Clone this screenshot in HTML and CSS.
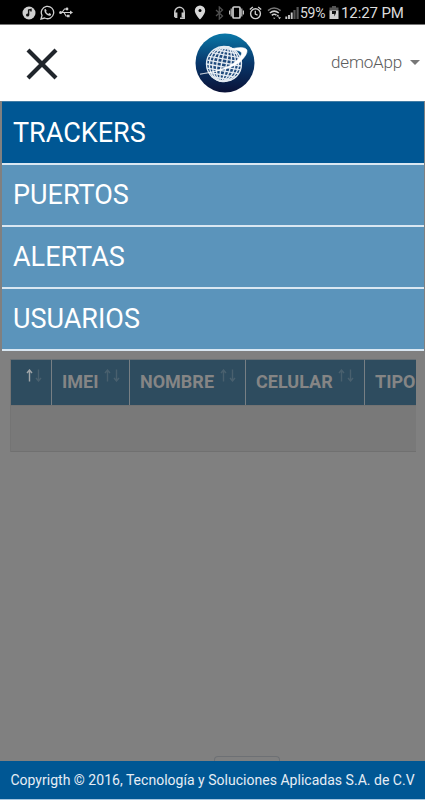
FILE: index.html
```html
<!DOCTYPE html>
<html lang="es">
<head>
  <meta charset="UTF-8" />
  <meta name="viewport" content="width=device-width, initial-scale=1.0"/>
  <title>Trackers</title>
  <link rel="stylesheet" href="styles.css">
</head>
<body>

<!-- Status bar -->
<div class="status-bar">
  <div class="status-left">
    <svg width="14" height="14" viewBox="0 0 14 14">
      <circle cx="7" cy="7" r="6.5" fill="#d0d0d0"/>
      <path d="M6.600 9.300V4L9 3.400v2" fill="none" stroke="#111" stroke-width="1.400"/>
      <circle cx="5.600" cy="9" r="1.600" fill="#111"/>
    </svg>
    <svg width="15" height="15" viewBox="0 0 15 15">
      <path d="M1 14l1-3.600A6.200 6.200 0 1 1 4.600 13z" fill="none" stroke="#d0d0d0" stroke-width="1.300"/>
      <path d="M4.500 4.300l1.200-.4 1 2-.7.9q.8 1.500 2.300 2.100l.9-.8 1.900 1-.4 1.300q-1.300 1-3.500-.4-3.300-2.200-2.700-5.700z" fill="#d0d0d0"/>
    </svg>
    <svg width="14" height="11" viewBox="0 0 14 11">
      <path d="M1 5.500h11M3 5.500L5.500 2H8M5 5.500L7 9h2" fill="none" stroke="#d0d0d0" stroke-width="1.100"/>
      <circle cx="1.600" cy="5.500" r="1.500" fill="#d0d0d0"/>
      <circle cx="8" cy="2" r="1.400" fill="#d0d0d0"/>
      <path d="M8 7.700h2.600v2.600H8zM11 3.600l3 1.900-3 1.900z" fill="#d0d0d0"/>
    </svg>
  </div>
  <div class="status-right">
    <svg class="headset" width="13" height="14" viewBox="0 0 13 14">
      <path d="M1.800 9V6a4.700 4.700 0 0 1 9.400 0v6.300H7" fill="none" stroke="#c8c8c8" stroke-width="1.500"/>
      <path d="M1 6.500h3.400V12H2.500L1 10.800zM8.600 6.500H12V11.500H8.600z" fill="#c8c8c8"/>
    </svg>
    <svg class="pin" width="12" height="15" viewBox="0 0 12 15">
      <path d="M6 .5a5.200 5.200 0 0 0-5.200 5.200C.8 9 6 14.500 6 14.500S11.200 9 11.200 5.700A5.200 5.200 0 0 0 6 .5z" fill="#d8d8d8"/>
      <circle cx="6" cy="5.600" r="1.500" fill="#000"/>
    </svg>
    <svg class="bluetooth" width="9" height="14" viewBox="0 0 9 14">
      <path d="M1 4l6.500 6L4.300 13V1l3.200 3L1 10" fill="none" stroke="#505050" stroke-width="1.300"/>
    </svg>
    <svg class="vibrate" width="15" height="13" viewBox="0 0 15 13">
      <rect x="4" y="1" width="7" height="11" rx="1" fill="none" stroke="#d0d0d0" stroke-width="1.700"/>
      <path d="M2.200 2.500v8M.6 4.500v4M12.800 2.500v8M14.400 4.500v4" stroke="#d0d0d0" stroke-width="1.100"/>
    </svg>
    <svg class="alarm" width="13" height="14" viewBox="0 0 13 14">
      <circle cx="6.500" cy="7.700" r="4.900" fill="none" stroke="#d0d0d0" stroke-width="1.400"/>
      <path d="M.8 3.600L3.800 1M12.200 3.600L9.200 1M6.300 4.800v3.300l2.300 1" fill="none" stroke="#d0d0d0" stroke-width="1.300"/>
    </svg>
    <svg class="wifi" width="15" height="14" viewBox="0 0 15 14">
      <path d="M1 4.600q6-5.200 12.600 0" fill="none" stroke="#777" stroke-width="1.500"/>
      <path d="M2.800 7q4.400-3.700 9 0M4.800 9.400q2.300-2 4.700-.2" fill="none" stroke="#d0d0d0" stroke-width="1.500"/>
      <path d="M6 11.700h2.400L7.200 13zM9.300 10.400l1.500-2 1.500 2zM11 11.300h3l-1.500 2z" fill="#d0d0d0"/>
    </svg>
    <svg class="signal" width="14" height="12" viewBox="0 0 14 12">
      <path d="M1.300 12V9.500M4 12V8M6.700 12V5.500" stroke="#c8c8c8" stroke-width="1.900"/>
      <path d="M9.500 12V3M12.600 12V0" stroke="#555" stroke-width="2.200"/>
    </svg>
    <span class="percent">59%</span>
    <svg class="battery" width="10" height="13" viewBox="0 0 10 13">
      <path d="M3 0h4v1.500h2.500V5H.5V1.500H3z" fill="#555"/>
      <path d="M.5 4.500h9V13h-9z" fill="#d0d0d0"/>
      <path d="M3 5h4v2L5.300 10.500V8H3z" fill="#111"/>
    </svg>
    <span class="clock">12:27 PM</span>
  </div>
</div>

<!-- Header -->
<header class="header">
  <button class="close-btn" aria-label="Cerrar">
    <svg width="32" height="32" viewBox="0 0 32 32">
      <path d="M2 2l28 28M30 2L2 30" stroke="#20252b" stroke-width="4.200"/>
    </svg>
  </button>
  <svg class="logo" width="60" height="60" viewBox="0 0 60 60">
    <defs>
      <linearGradient id="sky" x1="0" y1="0" x2="0" y2="1">
        <stop offset="0" stop-color="#0a78a8"/>
        <stop offset=".5" stop-color="#08376b"/>
        <stop offset="1" stop-color="#0b1237"/>
      </linearGradient>
    </defs>
    <circle cx="30" cy="30" r="29.500" fill="url(#sky)"/>
    <g transform="rotate(10 29 31)" fill="none" stroke="#e4ebf2" stroke-width="1.350">
      <circle cx="29" cy="31" r="17.500" fill="#1f4a7c"/>
      <ellipse cx="29" cy="31" rx="2.500" ry="17.500"/>
      <ellipse cx="29" cy="31" rx="7" ry="17.500"/>
      <ellipse cx="29" cy="31" rx="11" ry="17.500"/>
      <ellipse cx="29" cy="31" rx="14.500" ry="17.500"/>
      <path d="M22 15.500h14M18 18.500h22M15 22h28M13 26h32M12 30h34M12 34h34M13 38h32M15 42h28M19 45.500h20"/>
    </g>
    <path d="M5 41.200Q23 38.500 35 32.500Q44 27 46.500 21Q48 17.500 35 16Q50 12.500 52 17Q53 21 45.500 28.500Q37 36.500 5 41.200z" fill="#fff" stroke="#fff" stroke-width=".5"/>
  </svg>
  <div class="user-menu">demoApp <span class="caret"></span></div>
</header>

<!-- Dimmed page with the open menu -->
<main class="content">
  <nav class="menu">
    <a class="active" href="#">TRACKERS</a>
    <a href="#">PUERTOS</a>
    <a href="#">ALERTAS</a>
    <a href="#">USUARIOS</a>
  </nav>

  <div class="table-wrap">
    <table>
      <tr>
        <th class="col-id">
          <svg class="sort sort-asc" width="16" height="13" viewBox="0 0 16 13">
            <path class="up" d="M3.500 12.500V1M1 4l2.500-3L6 4"/>
            <path d="M12.500 .5V12M10 9l2.500 3L15 9"/>
          </svg>
        </th>
        <th class="col-imei">IMEI
          <svg class="sort" width="16" height="13" viewBox="0 0 16 13">
            <path d="M3.500 12.500V1M1 4l2.500-3L6 4M12.500 .5V12M10 9l2.500 3L15 9"/>
          </svg>
        </th>
        <th class="col-nombre">NOMBRE
          <svg class="sort" width="16" height="13" viewBox="0 0 16 13">
            <path d="M3.500 12.500V1M1 4l2.500-3L6 4M12.500 .5V12M10 9l2.500 3L15 9"/>
          </svg>
        </th>
        <th class="col-celular">CELULAR
          <svg class="sort" width="16" height="13" viewBox="0 0 16 13">
            <path d="M3.500 12.500V1M1 4l2.500-3L6 4M12.500 .5V12M10 9l2.500 3L15 9"/>
          </svg>
        </th>
        <th class="col-tipo">TIPO</th>
      </tr>
      <tr>
        <td colspan="5"></td>
      </tr>
    </table>
  </div>

  <div class="pager"></div>
</main>

<footer class="footer">Copyrigth © 2016, Tecnología y Soluciones Aplicadas S.A. de C.V</footer>

</body>
</html>
```
FILE: styles.css
```css
* {
  margin: 0;
  padding: 0;
  box-sizing: border-box;
}

body {
  font-family: Roboto, sans-serif;
  background: #808080;
  height: 100vh;
  display: flex;
  flex-direction: column;
  overflow: hidden;
}

.status-bar {
  height: 25px;
  background: #000;
  border-bottom: 1px solid #777;
  color: #dcdcdc;
  display: flex;
  justify-content: space-between;
  padding: 1px 21px 0 22px;
}

.status-left,
.status-right {
  display: flex;
  align-items: center;
}

.status-left {
  gap: 4px;
}

.status-right .pin {
  margin-left: 8px;
}

.status-right .bluetooth {
  margin-left: 9px;
}

.status-right .vibrate {
  margin-left: 5px;
}

.status-right .alarm {
  margin-left: 5px;
}

.status-right .wifi {
  margin-left: 5px;
}

.status-right .signal {
  margin-left: 3px;
}

.percent {
  margin-left: 1px;
  width: 25px;
  font-size: 14px;
  letter-spacing: -0.3px;
}

.battery {
  margin-left: 4px;
}

.clock {
  margin-left: 2px;
  width: 63px;
  font-size: 15px;
  letter-spacing: -0.1px;
  white-space: nowrap;
}

.header {
  height: 76px;
  background: #fff;
  display: grid;
  grid-template-columns: 1fr 60px 170px;
  align-items: center;
}

.close-btn {
  width: 32px;
  height: 32px;
  margin-left: 26px;
  margin-top: 2px;
  border: none;
  background: none;
  cursor: pointer;
}

.user-menu {
  justify-self: end;
  display: flex;
  align-items: center;
  gap: 8px;
  padding-right: 5px;
  color: #5c5c5c;
  font-size: 17px;
  font-weight: 300;
  letter-spacing: -0.2px;
  margin-top: -2px;
}

.caret {
  border-left: 5px solid transparent;
  border-right: 5px solid transparent;
  border-top: 5px solid #777;
}

.content {
  flex: 1;
  display: flex;
  flex-direction: column;
}

.menu {
  margin: 0 1px 0 2px;
  padding-top: 1px;
  background: #005794;
  border-top: 1px solid #437da5;
}

.menu a {
  display: block;
  height: 62px;
  padding-left: 11px;
  line-height: 61px;
  font-size: 27px;
  color: #fff;
  text-decoration: none;
  background: #5b94bb;
  border-bottom: 2px solid #d9e7f2;
}

.menu a.active {
  background: #005794;
}

.table-wrap {
  margin: 8px 9px 0 10px;
  overflow: hidden;
}

table {
  width: 432px;
  table-layout: fixed;
  border-collapse: separate;
  border-spacing: 0;
  border-left: 1px solid #747474;
}

th {
  height: 46px;
  padding-left: 10px;
  padding-bottom: 2px;
  background: #2e4c5f;
  border-right: 1px solid #777f84;
  border-top: 1px solid #687176;
  color: #858585;
  font-size: 18px;
  font-weight: bold;
  text-align: left;
  white-space: nowrap;
}

.col-id {
  width: 41px;
  padding-left: 15px;
}

.col-imei {
  width: 78px;
}

.col-nombre {
  width: 116px;
}

.col-celular {
  width: 119px;
}

.sort {
  margin-top: -8px;
  margin-left: 1px;
  fill: none;
  stroke: #49606e;
  stroke-width: 1.4;
  vertical-align: 6px;
}

.col-id .sort {
  margin-left: 0;
}

.sort-asc .up {
  stroke: #a0a5a8;
}

td {
  height: 47px;
  background: #797979;
  border-top: 1px solid #737373;
  border-bottom: 1px solid #707070;
}

.pager {
  width: 66px;
  height: 5px;
  margin: auto 0 0 214px;
  border: 1px solid #6d7074;
  border-bottom: none;
  border-radius: 4px 4px 0 0;
}

.footer {
  height: 39px;
  background: #005794;
  border-bottom: 1px solid #a6c6df;
  color: #e6edf5;
  font-size: 14px;
  letter-spacing: 0.02px;
  line-height: 38px;
  text-align: center;
  white-space: nowrap;
}
```
